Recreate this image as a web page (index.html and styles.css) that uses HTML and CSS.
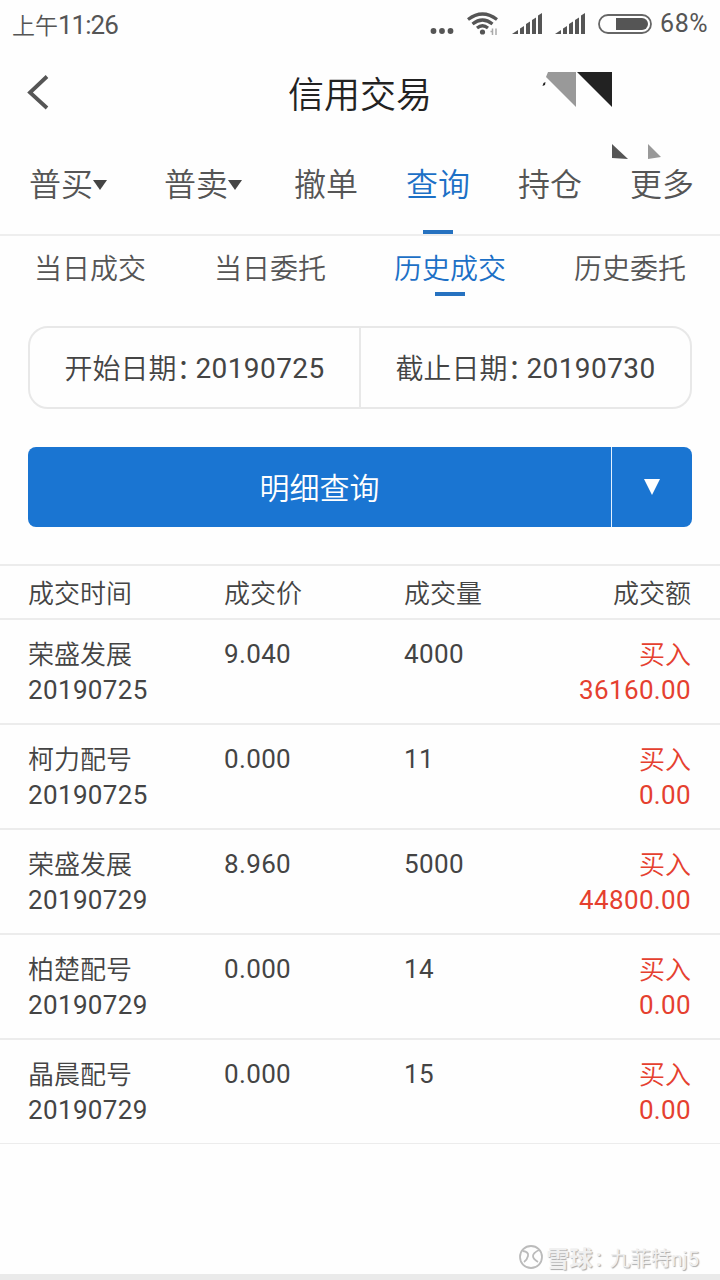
FILE: index.html
```html
<!DOCTYPE html>
<html lang="zh-CN">
<head>
<meta charset="utf-8">
<title>信用交易</title>
<link rel="stylesheet" href="styles.css">
</head>
<body>
<div class="screen">
  <header class="status">
    <div class="clock"><span class="ampm">上午</span><span class="time">11:26</span></div>
    <div class="indicators">
      <svg class="dots" width="24" height="22" viewBox="0 0 24 22"><g fill="#555"><circle cx="3.500" cy="18" r="2.900"/><circle cx="12" cy="18" r="2.900"/><circle cx="20.500" cy="18" r="2.900"/></g></svg>
      <svg class="wifi" width="32" height="24" viewBox="0 0 32 24"><g fill="none" stroke="#555" stroke-width="3.200"><path d="M1 7.500Q15.500-3.500 30 7.500"/><path d="M5.500 12Q15.500 4 25.500 12"/><path d="M10 16Q15.500 11.500 21 16"/></g><circle cx="15.500" cy="20" r="2.600" fill="#555"/><path d="M25.500 16.500v6.500M23.500 19.500h2M29 16.500v6.500" stroke="#aaa" stroke-width="1.500" fill="none"/></svg>
      <svg class="signal" width="30" height="22" viewBox="0 0 30 22"><path fill="#555" d="M0 21l6-4v4zM8 15.500l4-2.500V21H8zM14 11l4-2.500V21h-4zM20 7l4-2.500V21h-4zM26 2.500L30 0V21h-4z"/></svg>
      <svg class="signal" width="30" height="22" viewBox="0 0 30 22"><path fill="#555" d="M0 21l6-4v4zM8 15.500l4-2.500V21H8zM14 11l4-2.500V21h-4zM20 7l4-2.500V21h-4zM26 2.500L30 0V21h-4z"/></svg>
      <svg class="battery" width="54" height="20" viewBox="0 0 54 20"><rect x="1" y="1" width="52" height="18" rx="9" fill="none" stroke="#666" stroke-width="1.800"/><path d="M18 4h26a6 6 0 0 1 0 12H18z" fill="#555"/></svg>
      <span class="percent">68%</span>
    </div>
  </header>

  <div class="titlebar">
    <svg class="back" width="24" height="36" viewBox="0 0 24 36"><path d="M21 2.500L4 18.500l17 15.500" fill="none" stroke="#555" stroke-width="3.800"/></svg>
    <h1 class="title">信用交易</h1>
    <svg class="shards" width="130" height="96" viewBox="0 0 130 96"><path d="M8 8h28v35L6 13z" fill="#999"/><path d="M37 8h35v35z" fill="#222"/><path d="M2.500 22l1-3 2-1-.5 3z" fill="#222"/><path d="M72 80l16 15-16-1z" fill="#555"/><path d="M108 80l13 13-13 2z" fill="#999"/></svg>
  </div>

  <nav class="tabs">
    <a class="tab">普买<svg width="14" height="10" viewBox="0 0 14 10"><path d="M0 0h14L7 10z"/></svg></a>
    <a class="tab sell">普卖<svg width="14" height="10" viewBox="0 0 14 10"><path d="M0 0h14L7 10z"/></svg></a>
    <a class="tab cancel">撤单</a>
    <a class="tab active">查询</a>
    <a class="tab">持仓</a>
    <a class="tab">更多</a>
  </nav>

  <nav class="subtabs">
    <a class="subtab">当日成交</a>
    <a class="subtab">当日委托</a>
    <a class="subtab active">历史成交</a>
    <a class="subtab">历史委托</a>
  </nav>

  <div class="dates">
    <div class="date"><span class="date-label">开始日期：</span><span class="num">20190725</span></div>
    <div class="date"><span class="date-label">截止日期：</span><span class="num">20190730</span></div>
  </div>

  <div class="query">
    <div class="query-label">明细查询</div>
    <div class="query-more"><svg width="16" height="16" viewBox="0 0 16 16"><path d="M0 0h16L8 16z" fill="#fff"/></svg></div>
  </div>

  <section class="table">
    <div class="row head"><div>成交时间</div><div>成交价</div><div>成交量</div><div class="amount">成交额</div></div>
    <div class="row"><div><span class="cn">荣盛发展</span><br>20190725</div><div>9.040</div><div>4000</div><div class="amount buy"><span class="cn">买入</span><br>36160.00</div></div>
    <div class="row"><div><span class="cn">柯力配号</span><br>20190725</div><div>0.000</div><div>11</div><div class="amount buy"><span class="cn">买入</span><br>0.00</div></div>
    <div class="row"><div><span class="cn">荣盛发展</span><br>20190729</div><div>8.960</div><div>5000</div><div class="amount buy"><span class="cn">买入</span><br>44800.00</div></div>
    <div class="row"><div><span class="cn">柏楚配号</span><br>20190729</div><div>0.000</div><div>14</div><div class="amount buy"><span class="cn">买入</span><br>0.00</div></div>
    <div class="row"><div><span class="cn">晶晨配号</span><br>20190729</div><div>0.000</div><div>15</div><div class="amount buy"><span class="cn">买入</span><br>0.00</div></div>
  </section>

  <footer class="footer">
    <div class="watermark">
      <svg width="26" height="26" viewBox="0 0 26 26"><g fill="none" stroke="#bbb" stroke-width="1.800"><circle cx="13" cy="13" r="11"/><path d="M5 7q6 1 5 5t-4 6M21 6q-6 3-6 6t5 6"/></g></svg>
      <span class="brand">雪球</span><span class="sep">：</span><span>九菲特nj5</span>
    </div>
    <div class="strip"></div>
  </footer>
</div>
</body>
</html>
```
FILE: styles.css
```css
* { box-sizing: border-box; }
body {
  margin: 0;
  background: #fefefe;
  color: #444;
  font-family: Roboto, "Noto Sans CJK SC", sans-serif;
}
svg { display: block; flex: none; }
.screen {
  width: 720px;
  height: 1280px;
  display: flex;
  flex-direction: column;
  overflow: hidden;
}

.status {
  height: 50px;
  padding: 0 12px 0 12px;
  display: flex;
  justify-content: space-between;
  align-items: flex-start;
  color: #555;
}
.clock { line-height: 51px; white-space: nowrap; }
.ampm { font-size: 23px; font-weight: 350; }
.time { font-size: 26px; letter-spacing: -1px; }
.indicators { height: 48px; display: flex; align-items: center; }
.wifi { margin-left: 13px; }
.signal { margin-left: 13px; }
.battery { margin-left: 13px; }
.percent { margin-left: 8px; font-size: 25px; letter-spacing: .5px; line-height: 50px; }

.titlebar {
  position: relative;
  height: 86px;
  padding-left: 26px;
  display: flex;
  align-items: center;
}
.back { margin-bottom: 2px; }
.title {
  margin: 0 0 3px 238px;
  font-family: "Noto Sans CJK SC", sans-serif;
  font-size: 36px;
  font-weight: 350;
  line-height: 86px;
  color: #222;
}
.shards { position: absolute; left: 540px; top: 14px; }

.tabs {
  height: 100px;
  padding-left: 29px;
  display: flex;
  gap: 48px;
  border-bottom: 2px solid #eee;
  color: #555;
}
.tab {
  position: relative;
  display: flex;
  align-items: center;
  padding-bottom: 6px;
  font-family: "Noto Sans CJK SC", sans-serif;
  font-size: 32px;
  font-weight: 350;
  line-height: 92px;
  height: 98px;
}
.tab svg { fill: #444; margin-top: 6px; }
.tab.sell { margin-left: 9px; }
.tab.cancel { margin-left: 4px; }
.active { color: #1c70c6; }
.active::after {
  content: "";
  position: absolute;
  left: 50%;
  width: 30px;
  height: 4px;
  margin-left: -15px;
  background: #2672c0;
}
.tab.active::after { bottom: 0; }

.subtabs {
  height: 90px;
  display: grid;
  grid-template-columns: repeat(4, 1fr);
  color: #555;
}
.subtab {
  position: relative;
  height: 60px;
  font-family: "Noto Sans CJK SC", sans-serif;
  font-size: 28px;
  font-weight: 350;
  line-height: 62px;
  text-align: center;
}
.subtab.active { color: #1c70c6; }
.subtab.active::after { bottom: 0; }

.dates {
  height: 83px;
  margin: 0 28px;
  display: flex;
  border: 2px solid #e8e8e8;
  border-radius: 20px;
  font-size: 28px;
  line-height: 82px;
}
.date {
  flex: 1;
  display: flex;
  justify-content: center;
  white-space: nowrap;
  font-feature-settings: "halt";
}
.date-label { font-weight: 350; line-height: 83px; }
.date + .date { border-left: 2px solid #e8e8e8; }
.num { margin-left: 5px; letter-spacing: .4px; }

.query {
  height: 80px;
  margin: 38px 28px 37px;
  display: flex;
  border-radius: 8px;
  background: #1a75d2;
  color: #fff;
  font-size: 30px;
  font-weight: 350;
  line-height: 83px;
}
.query-label { flex: 1; text-align: center; }
.query-more {
  width: 81px;
  display: flex;
  align-items: center;
  justify-content: center;
  border-left: 1px solid #e3f1ff;
}

.table {
  border-top: 2px solid #ececec;
  font-size: 26px;
  line-height: 36px;
}
.row {
  height: 105px;
  padding: 16px 29px 0 28px;
  display: grid;
  grid-template-columns: 196px 180px 130px 1fr;
  border-bottom: 2px solid #ececec;
  letter-spacing: .35px;
}
.row.head { height: 54px; padding-top: 10px; letter-spacing: 0; font-weight: 350; }
.row:last-child { border-bottom-width: 1px; height: 104px; }
.cn { line-height: 1; letter-spacing: 0; vertical-align: -1px; font-weight: 350; }
.amount { text-align: right; }
.buy { color: #e5402f; }

.footer {
  margin-top: auto;
  display: flex;
  flex-direction: column;
}
.watermark {
  height: 34px;
  padding-right: 21px;
  display: flex;
  justify-content: flex-end;
  align-items: center;
  font-size: 20.5px;
  color: #f0f0f0;
  text-shadow: 1px 1px 1px #aaa;
  white-space: nowrap;
  font-feature-settings: "halt";
}
.brand { margin: 0 1px 0 3px; font-size: 23px; font-weight: 700; }
.sep { margin-right: 6px; }
.strip { height: 6px; background: #eaeaea; }
```
